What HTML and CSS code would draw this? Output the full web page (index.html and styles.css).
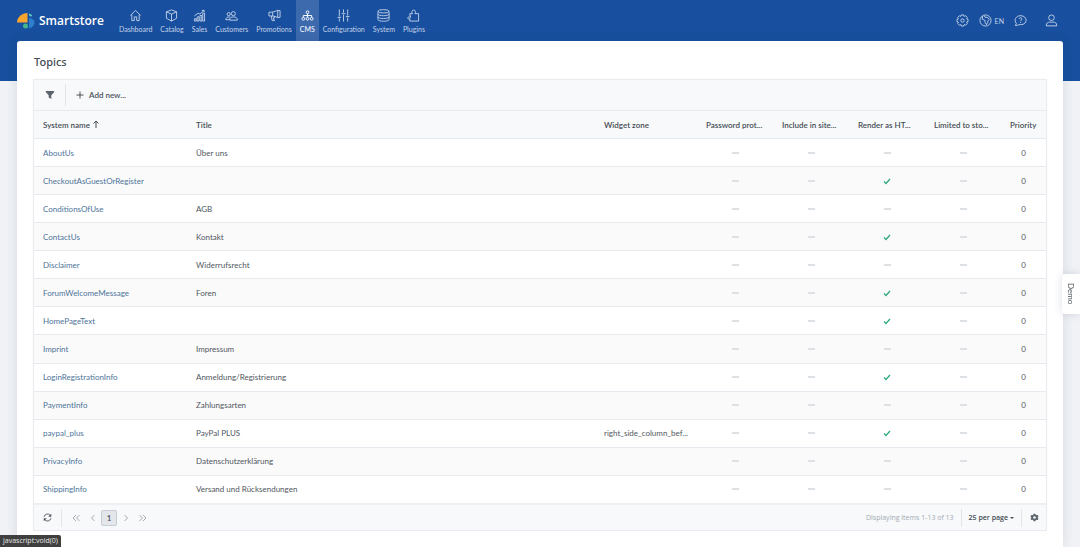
FILE: index.html
```html
<!DOCTYPE html>
<html lang="en">
<head>
<meta charset="utf-8">
<title>Topics</title>
<link rel="stylesheet" href="styles.css">
</head>
<body>
<header class="navbar">
  <a class="brand" href="#">
    <svg class="brand-mark" viewBox="0 0 18 18"><path d="M0 10.500A10 10 0 0 1 10.500 1V10.500Z" fill="#f9a52e"/><path d="M12 1.500A5 5 0 0 1 15.500 4 3 3 0 0 1 12 3.500Z" fill="#57c5c9"/><path d="M12 6A6 6 0 0 1 17.500 9.500 6.500 6.500 0 0 1 12 16.500Z" fill="#2e7fd0"/><circle cx="8.500" cy="14" r="2.500" fill="#43b88c"/></svg>
    <span>Smartstore</span>
  </a>
  <nav class="menu">
    <a class="menu-item" href="#"><svg viewBox="0 0 14 14"><path d="M1.500 7 7 1.500 12.500 7M3 6V12.500H5.700V8.500H8.300V12.500H11V6"/></svg><span>Dashboard</span></a>
    <a class="menu-item" href="#"><svg viewBox="0 0 14 14"><path d="M7 1 12.500 3V10L7 13 1.500 10V3ZM1.500 3 7 5.500 12.500 3M7 5.500V13"/></svg><span>Catalog</span></a>
    <a class="menu-item" href="#"><svg viewBox="0 0 14 14"><path d="M1.500 13V10.500H3.500V13ZM4.500 13V8.500H6.500V13ZM7.500 13V7H9.500V13ZM10.500 13V4.500H12.500V13ZM1.500 7.500 5.500 4.500 7.500 5.500 12 1.500M9.500 1.500H12V3.500"/></svg><span>Sales</span></a>
    <a class="menu-item" href="#"><svg viewBox="0 0 14 14"><circle cx="9" cy="5" r="2.200"/><circle cx="4" cy="5.500" r="1.700"/><path d="M5 12C5 9.500 6.500 8.500 9 8.500S13.300 9.500 13.300 12ZM5.500 8.700C2.500 8 1 9.500 .8 11.500H5"/></svg><span>Customers</span></a>
    <a class="menu-item" href="#"><svg viewBox="0 0 14 14"><path d="M1 3.500C5 3.500 8 3 10.500 1.200V9.500C8 7.500 5 7.500 1 7.500ZM10.500 1.700H13V9H10.500M5 3.500V7.500M3.500 7.500 4.500 12.500H7L5.700 9.500H7V7.800"/></svg><span>Promotions</span></a>
    <a class="menu-item active" href="#"><svg viewBox="0 0 14 14"><circle cx="7" cy="3.500" r="1.500"/><circle cx="2.500" cy="10.500" r="1.500"/><circle cx="7" cy="10.500" r="1.500"/><circle cx="11.500" cy="10.500" r="1.500"/><path d="M7 5V9M2.500 9V7H11.500V9"/></svg><span>CMS</span></a>
    <a class="menu-item" href="#"><svg viewBox="0 0 14 14"><path d="M2.500 .5V8M2.500 10V13.500M7 .5V4M7 6V13.500M11.500 .5V7M11.500 9V13.500M.5 9H4.500M5 5H9M9.500 8H13.500"/></svg><span>Configuration</span></a>
    <a class="menu-item" href="#"><svg viewBox="0 0 14 14"><ellipse cx="7" cy="2.500" rx="6" ry="1.800"/><path d="M1 2.500V11.500C1 13.700 13 13.700 13 11.500V2.500M1 5.500C1 7.800 13 7.800 13 5.500M1 8.500C1 10.800 13 10.800 13 8.500"/></svg><span>System</span></a>
    <a class="menu-item" href="#"><svg viewBox="0 0 14 14"><path d="M3 5H6C4.800 3.800 5 1.200 7.200 1.200S9.600 3.800 8.500 5H12.500V13H3V10.300C1.500 11.300 .7 10.500 .9 9.500 1 8.300 2.200 8.300 3.800 9V7H3Z"/></svg><span>Plugins</span></a>
  </nav>
  <div class="tools">
    <button class="tool" aria-label="Settings"><svg viewBox="0 0 14 14"><circle cx="7" cy="7" r="1.800"/><path d="M5.800 1H8.200L8.600 2.500 10.300 1.900 12.100 3.700 11.500 5.400 13 5.800V8.200L11.500 8.600 12.100 10.300 10.300 12.100 8.600 11.500 8.200 13H5.800L5.400 11.500 3.700 12.100 1.900 10.300 2.500 8.600 1 8.200V5.800L2.500 5.400 1.900 3.700 3.700 1.900 5.400 2.500Z"/></svg></button>
    <button class="tool"><svg viewBox="0 0 14 14"><circle cx="7" cy="7" r="6"/><path d="M4 2.200 3.500 5.500 6.500 7V9L8 11.500 9.500 9V7.500L11 6 9 3.500H6.500L5.500 1.500"/></svg><span>EN</span></button>
    <button class="tool" aria-label="Help"><svg viewBox="0 0 14 14"><path d="M1.500 12.500 2.500 10C-.5 6.500 2 1.800 7.200 1.800 15 2 15 11.500 7.200 11.500 6 11.500 5 11.300 4 12Z"/><path d="M5.500 5.300C5.700 3.600 8.800 3.800 8.500 5.500 8.300 6.500 7 6.500 7 7.700M7 8.700V9.700"/></svg></button>
    <button class="tool account" aria-label="Account"><svg viewBox="0 0 14 14"><circle cx="7" cy="4" r="3"/><path d="M1.300 12.800C1.300 9.500 3.500 8.800 5 8.800H9C11 8.800 12.700 9.500 12.700 12.800Z"/></svg></button>
  </div>
</header>
<main class="page">
  <h1>Topics</h1>
  <section class="grid">
    <div class="toolbar">
      <button class="filter" aria-label="Filter"><svg viewBox="0 0 10 10"><path d="M.8 1H9.200V2L6.300 5.300V9L3.700 7.500V5.300L.8 2Z" fill="currentColor"/></svg></button>
      <button class="add"><svg viewBox="0 0 8 8"><path d="M4 .5V7.500M.5 4H7.500"/></svg><span>Add new...</span></button>
    </div>
    <table>
      <colgroup><col class="c-name"><col><col class="c-zone"><col class="c-flag"><col class="c-flag"><col class="c-flag"><col class="c-flag"><col class="c-prio"></colgroup>
      <thead><tr><th>System name <svg class="sort" viewBox="0 0 8 8"><path d="M4 8V1M1.500 3.500 4 1 6.500 3.500"/></svg></th><th>Title</th><th>Widget zone</th><th>Password prot...</th><th>Include in site...</th><th>Render as HT...</th><th>Limited to sto...</th><th>Priority</th></tr></thead>
      <tbody id="rows"></tbody>
    </table>
    <footer class="pager">
      <button class="refresh" aria-label="Refresh"><svg viewBox="0 0 10 10"><path d="M1.200 4.200A3.900 3.900 0 0 1 8 2.500M8.800 5.800A3.900 3.900 0 0 1 2 7.500"/><path d="M9.200 .8V4.200H5.800ZM.8 9.200V5.800H4.200Z" fill="currentColor" stroke="none"/></svg></button>
      <button class="step" aria-label="First page"><svg viewBox="0 0 8 8"><path d="M4 1 1 4 4 7M7.500 1 4.500 4 7.500 7"/></svg></button>
      <button class="step" aria-label="Previous page"><svg viewBox="0 0 8 8"><path d="M5.500 1 2.500 4 5.500 7"/></svg></button>
      <button class="current">1</button>
      <button class="step" aria-label="Next page"><svg viewBox="0 0 8 8"><path d="M2.500 1 5.500 4 2.500 7"/></svg></button>
      <button class="step" aria-label="Last page"><svg viewBox="0 0 8 8"><path d="M.5 1 3.500 4 .5 7M4 1 7 4 4 7"/></svg></button>
      <span class="summary">Displaying items 1-13 of 13</span>
      <button class="size"><span>25 per page</span><i class="caret"></i></button>
      <button class="options" aria-label="Grid options"><svg viewBox="0 0 10 10"><path fill="currentColor" fill-rule="evenodd" d="M4 .8H6L6.300 2 7.500 2.600 8.600 2.200 9.500 3.800 8.600 4.600V5.500L9.500 6.300 8.600 7.900 7.500 7.500 6.300 8.100 6 9.300H4L3.700 8.100 2.500 7.500 1.400 7.900 .5 6.300 1.400 5.500V4.600L.5 3.800 1.400 2.200 2.500 2.600 3.700 2ZM5 3.500A1.500 1.500 0 1 0 5 6.500 1.500 1.500 0 1 0 5 3.500Z"/></svg></button>
    </footer>
  </section>
</main>
<button class="demo">Demo</button>
<div class="status">javascript:void(0)</div>
<script src="rows.js"></script>
</body>
</html>
```
FILE: styles.css
```css
* { box-sizing: border-box; }
body {
  margin: 0;
  min-height: 100vh;
  display: flex;
  flex-direction: column;
  font: 8px/12px Lato, sans-serif;
  color: #50575e;
  background: linear-gradient(#184f9e 81px, #f0f2f5 81px);
}
a { color: inherit; text-decoration: none; }
button { font: inherit; color: inherit; background: none; border: 0; padding: 0; display: flex; align-items: center; justify-content: center; }
svg { display: block; flex: none; fill: none; stroke: currentColor; }

.navbar { display: flex; height: 41px; padding: 0 17px; color: #c3d2e8; }
.brand { display: flex; align-items: center; gap: 4px; margin-right: 11px; color: #fff; font: 600 12px/18px "Open Sans", sans-serif; }
.brand-mark { width: 18px; height: 18px; stroke: none; }
.menu { display: flex; }
.menu-item { display: flex; flex-direction: column; align-items: center; padding: 9px 4px 0; gap: 1px; font-size: 7px; }
.menu-item svg { width: 13px; height: 13px; }
.menu-item.active { background: #3d6aad; color: #fff; }
.tools { display: flex; align-items: center; gap: 10px; margin-left: auto; padding-right: 5px; }
.tool { gap: 3px; font-size: 7px; }
.tool svg { width: 13px; height: 13px; }
.account { margin-left: 8px; }

.page { flex: 1; display: flex; flex-direction: column; margin: 0 17px; padding: 13px 17px 17px; background: #fff; border-radius: 3px 3px 0 0; box-shadow: 0 0 12px rgba(30, 50, 90, .12); }
h1 { margin: 0 0 10px; font: 500 11px/16px "Noto Sans", sans-serif; color: #444b52; }
.grid { flex: 1; display: grid; grid-template-rows: auto 1fr auto; box-shadow: 0 0 0 1px #e9ebee, 0 0 3px rgba(0, 0, 0, .06); }
.toolbar { display: flex; align-items: center; height: 30px; padding: 4px 0; background: #f7f9fb; font-weight: 600; color: #4c535a; }
.filter { width: 32px; height: 22px; border-right: 1px solid #e2e5e9; color: #5b636d; }
.filter svg { width: 10px; height: 10px; stroke: none; }
.add { gap: 5px; padding-left: 10px; }
.add svg { width: 8px; height: 8px; }

table { width: 100%; border-spacing: 0; table-layout: fixed; }
.c-name { width: 153px; }
.c-zone { width: 102px; }
.c-flag { width: 76px; }
.c-prio { width: 45px; }
th, td { height: 28px; padding: 0 9px; border-top: 1px solid #e7eaee; text-align: left; white-space: nowrap; }
th { font-weight: 600; color: #454c53; background: #f7f9fb; }
td:nth-child(n+4) { text-align: center; }
tbody tr:nth-child(even) { background: #fafafb; }
td a { color: #4d7499; }
.sort { display: inline-block; width: 8px; height: 8px; vertical-align: 0; }
.dash { display: block; width: 7px; height: 2px; margin: 0 auto; background: #dde1e6; }
.check { width: 8px; height: 8px; margin: 0 auto; color: #2fa97c; stroke-width: 1.3; }

.pager { display: flex; align-items: center; height: 27px; border-top: 2px solid #edeff2; background: #f7f9fb; color: #a5abb3; }
.refresh { width: 28px; height: 18px; margin-right: 5px; border-right: 1px solid #e2e5e9; color: #4c535a; }
.refresh svg { width: 9px; height: 9px; }
.step { width: 17px; height: 16px; }
.step svg { width: 8px; height: 8px; }
.current { width: 16px; height: 16px; border: 1px solid #c8cdd4; border-radius: 2px; background: #e3e6eb; color: #4c535a; font-weight: 600; }
.summary, .size { font-family: "Open Sans", sans-serif; font-size: 7px; }
.summary { margin-left: auto; margin-right: 7px; }
.size { height: 18px; gap: 2px; padding: 0 7px; border: solid #e2e5e9; border-width: 0 1px; color: #454c53; font-weight: 600; }
.caret { border: 2px solid transparent; border-top-color: currentColor; border-bottom: 0; }
.options { width: 24px; color: #5b636d; }
.options svg { width: 9px; height: 9px; stroke: none; }

.demo { position: fixed; right: 0; top: 274px; width: 18px; height: 40px; writing-mode: vertical-rl; background: #fff; border-radius: 3px 0 0 3px; box-shadow: 0 0 8px rgba(30, 50, 90, .15); }
.status { position: fixed; left: 0; bottom: 0; padding: 0 3px; border-radius: 0 2px 0 0; background: #3f3f3f; color: #e8e8e8; font-family: "Open Sans", sans-serif; font-size: 7px; }
```
FILE: rows.js
```js
const topics = [
  ["AboutUs", "Über uns", "", false],
  ["CheckoutAsGuestOrRegister", "", "", true],
  ["ConditionsOfUse", "AGB", "", false],
  ["ContactUs", "Kontakt", "", true],
  ["Disclaimer", "Widerrufsrecht", "", false],
  ["ForumWelcomeMessage", "Foren", "", true],
  ["HomePageText", "", "", true],
  ["Imprint", "Impressum", "", false],
  ["LoginRegistrationInfo", "Anmeldung/Registrierung", "", true],
  ["PaymentInfo", "Zahlungsarten", "", false],
  ["paypal_plus", "PayPal PLUS", "right_side_column_bef...", true],
  ["PrivacyInfo", "Datenschutzerklärung", "", false],
  ["ShippingInfo", "Versand und Rücksendungen", "", false]
];
const dash = '<span class="dash"></span>';
const check = '<svg class="check" viewBox="0 0 8 8"><path d="M1 4.500 3 6.500 7 2"/></svg>';
document.getElementById("rows").innerHTML = topics.map(([name, title, zone, html]) =>
  `<tr><td><a href="#">${name}</a></td><td>${title}</td><td>${zone}</td><td>${dash}</td><td>${dash}</td><td>${html ? check : dash}</td><td>${dash}</td><td>0</td></tr>`
).join("");
```
